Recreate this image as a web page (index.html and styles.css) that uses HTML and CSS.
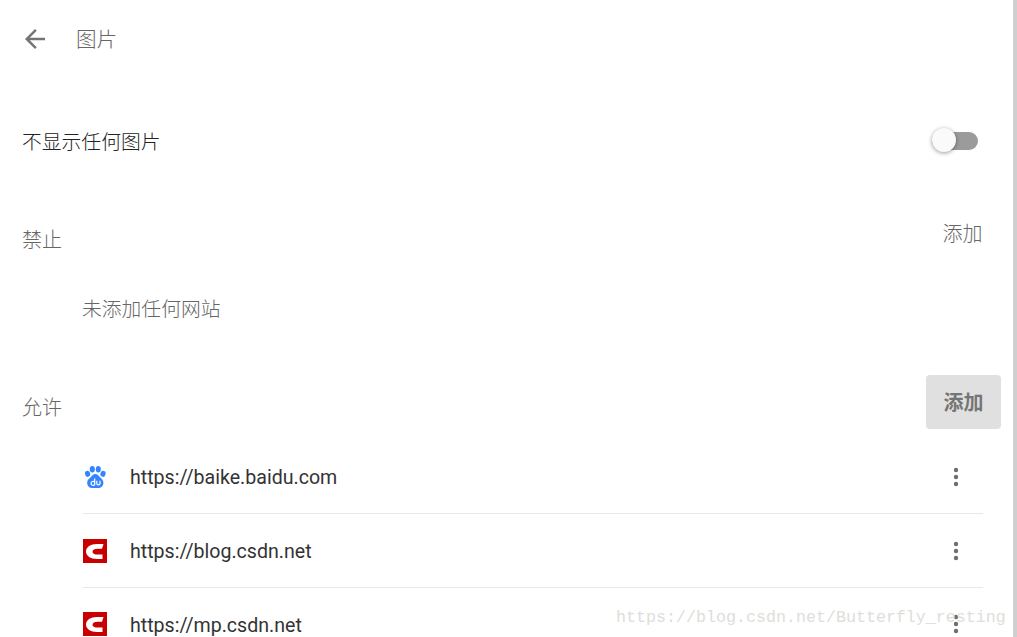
FILE: index.html
```html
<!DOCTYPE html>
<html lang="zh-CN">
<head>
<meta charset="utf-8">
<title>图片</title>
<link rel="stylesheet" href="styles.css">
</head>
<body>
<main class="page">
  <header class="top">
    <svg class="back" viewBox="0 0 24 24"><path d="M20 11H7.830l5.590-5.590L12 4l-8 8 8 8 1.410-1.410L7.830 13H20z"/></svg>
    <h1 class="title">图片</h1>
  </header>
  <div class="toggle-row">
    <span class="toggle-label">不显示任何图片</span>
    <span class="toggle"><span class="thumb"></span></span>
  </div>
  <section class="blocked">
    <div class="head">
      <h2 class="head-label">禁止</h2>
      <button class="add">添加</button>
    </div>
    <p class="empty">未添加任何网站</p>
  </section>
  <section class="allowed">
    <div class="head">
      <h2 class="head-label">允许</h2>
      <button class="add add-active">添加</button>
    </div>
    <ul class="list">
      <li class="row">
        <svg class="favicon" width="24" height="24" viewBox="0 0 24 24">
          <ellipse cx="4.600" cy="8.800" rx="2.600" ry="3.100" fill="#3385ff" transform="rotate(-10 4.600 8.800)"/>
          <ellipse cx="9.300" cy="4.200" rx="2.500" ry="3.200" fill="#3385ff"/>
          <ellipse cx="15.300" cy="4.200" rx="2.500" ry="3.200" fill="#3385ff"/>
          <ellipse cx="20" cy="8.800" rx="2.600" ry="3.100" fill="#3385ff" transform="rotate(10 20 8.800)"/>
          <path d="M12.300 9c2.100 0 3.200 1.500 4.200 2.800 1.300 1.500 3.900 2.700 3.900 6 0 3.600-2.800 5.200-4.800 5.200H9c-2.200 0-4.800-1.500-4.800-5.200 0-3.200 2.500-4.400 3.900-6C9.100 10.500 10.200 9 12.300 9z" fill="#3385ff"/>
          <path d="M11.700 13.600v6.400M11.700 17.200a2 2 0 1 0 0 2.400M13.800 15.700v2.800c0 1.700 3.200 1.700 3.200 0v-2.800" fill="none" stroke="#fff" stroke-width="1.200"/>
        </svg>
        <span class="url">https://baike.baidu.com</span>
        <svg class="more" viewBox="0 0 24 24"><circle cx="12" cy="5" r="2.200"/><circle cx="12" cy="12" r="2.200"/><circle cx="12" cy="19" r="2.200"/></svg>
      </li>
      <li class="row">
        <svg class="favicon" width="24" height="24" viewBox="0 0 24 24">
          <rect width="24" height="24" fill="#c90000"/>
          <path d="M20.500 5H14C7.500 5 3 8 3 12.500S7.500 20 14 20H19.500V15.600H14.500C11.500 15.600 9.500 14.500 9.500 12.700S11.500 9.800 14.500 9.800H19z" fill="#fff"/>
        </svg>
        <span class="url">https://blog.csdn.net</span>
        <svg class="more" viewBox="0 0 24 24"><circle cx="12" cy="5" r="2.200"/><circle cx="12" cy="12" r="2.200"/><circle cx="12" cy="19" r="2.200"/></svg>
      </li>
      <li class="row">
        <svg class="favicon" width="24" height="24" viewBox="0 0 24 24">
          <rect width="24" height="24" fill="#c90000"/>
          <path d="M20.500 5H14C7.500 5 3 8 3 12.500S7.500 20 14 20H19.500V15.600H14.500C11.500 15.600 9.500 14.500 9.500 12.700S11.500 9.800 14.500 9.800H19z" fill="#fff"/>
        </svg>
        <span class="url">https://mp.csdn.net</span>
        <svg class="more" viewBox="0 0 24 24"><circle cx="12" cy="5" r="2.200"/><circle cx="12" cy="12" r="2.200"/><circle cx="12" cy="19" r="2.200"/></svg>
      </li>
    </ul>
  </section>
  <div class="watermark">https://blog.csdn.net/Butterfly_resting</div>
</main>
</body>
</html>
```
FILE: styles.css
```css
* { box-sizing: border-box; }
html, body { margin: 0; padding: 0; height: 100%; overflow: hidden; background: #fff; }
body { font-family: Roboto, "Noto Sans CJK SC", sans-serif; font-size: 19.6px; color: #333; }
.page {
  position: relative;
  width: 1017px;
  height: 637px;
  overflow: hidden;
  padding-left: 22px;
  border-right: 4px solid #cfcfcf;
}
.top { display: flex; align-items: center; height: 78px; }
.back { fill: #757575; width: 30px; height: 30px; margin-left: -2px; flex: none; }
.title { margin: -2px 0 0 26px; font-size: 20.6px; font-weight: 300; color: #666; }
.toggle-row {
  display: flex;
  align-items: center;
  justify-content: space-between;
  height: 74px;
  margin-top: 26px;
  padding-right: 35px;
}
.toggle-label { color: #222; margin-top: -2px; font-size: 19.8px; font-weight: 300; }
.toggle { position: relative; display: block; width: 46px; height: 18px; border-radius: 9px; background: #9b9b9b; }
.thumb {
  position: absolute;
  left: 0;
  top: -4px;
  width: 24px;
  height: 24px;
  border-radius: 50%;
  background: #fafafa;
  box-shadow: 0 1px 4px rgba(0,0,0,.4);
}
.blocked { margin-top: 29px; }
.head { display: flex; align-items: center; justify-content: space-between; height: 54px; padding-right: 12px; }
.head-label { margin: 9px 0 0; font-size: 20px; font-weight: 300; color: #666; }
.add {
  width: 75px;
  height: 54px;
  border: 0;
  padding: 0 2px 4px 0;
  border-radius: 4px;
  background: transparent;
  font-family: inherit;
  font-size: 20px;
  font-weight: 300;
  color: #666;
}
.add-active { padding: 0 0 2px; background: #e0e0e0; font-weight: 700; color: #757575; }
.empty { margin: 22px 0 0 60px; height: 52px; line-height: 54px; font-size: 19.8px; font-weight: 300; color: #666; }
.allowed { margin-top: 40px; }
.list { list-style: none; margin: 11px 30px 0 61px; padding: 0; }
.row {
  display: flex;
  align-items: center;
  height: 74px;
  border-bottom: 1px solid #e8e8e8;
}
.row:last-child { height: 72px; border-bottom: 0; }
.favicon { flex: none; }
.url { margin-left: 23px; padding-top: 2px; flex: 1; }
.more { fill: #6e6e6e; margin-right: 15px; flex: none; width: 24px; height: 24px; }
.watermark {
  position: absolute;
  left: 616px;
  top: 607px;
  font-family: "Liberation Mono", monospace;
  font-size: 16.67px;
  line-height: 22px;
  color: #dededa;
  white-space: nowrap;
}
```
